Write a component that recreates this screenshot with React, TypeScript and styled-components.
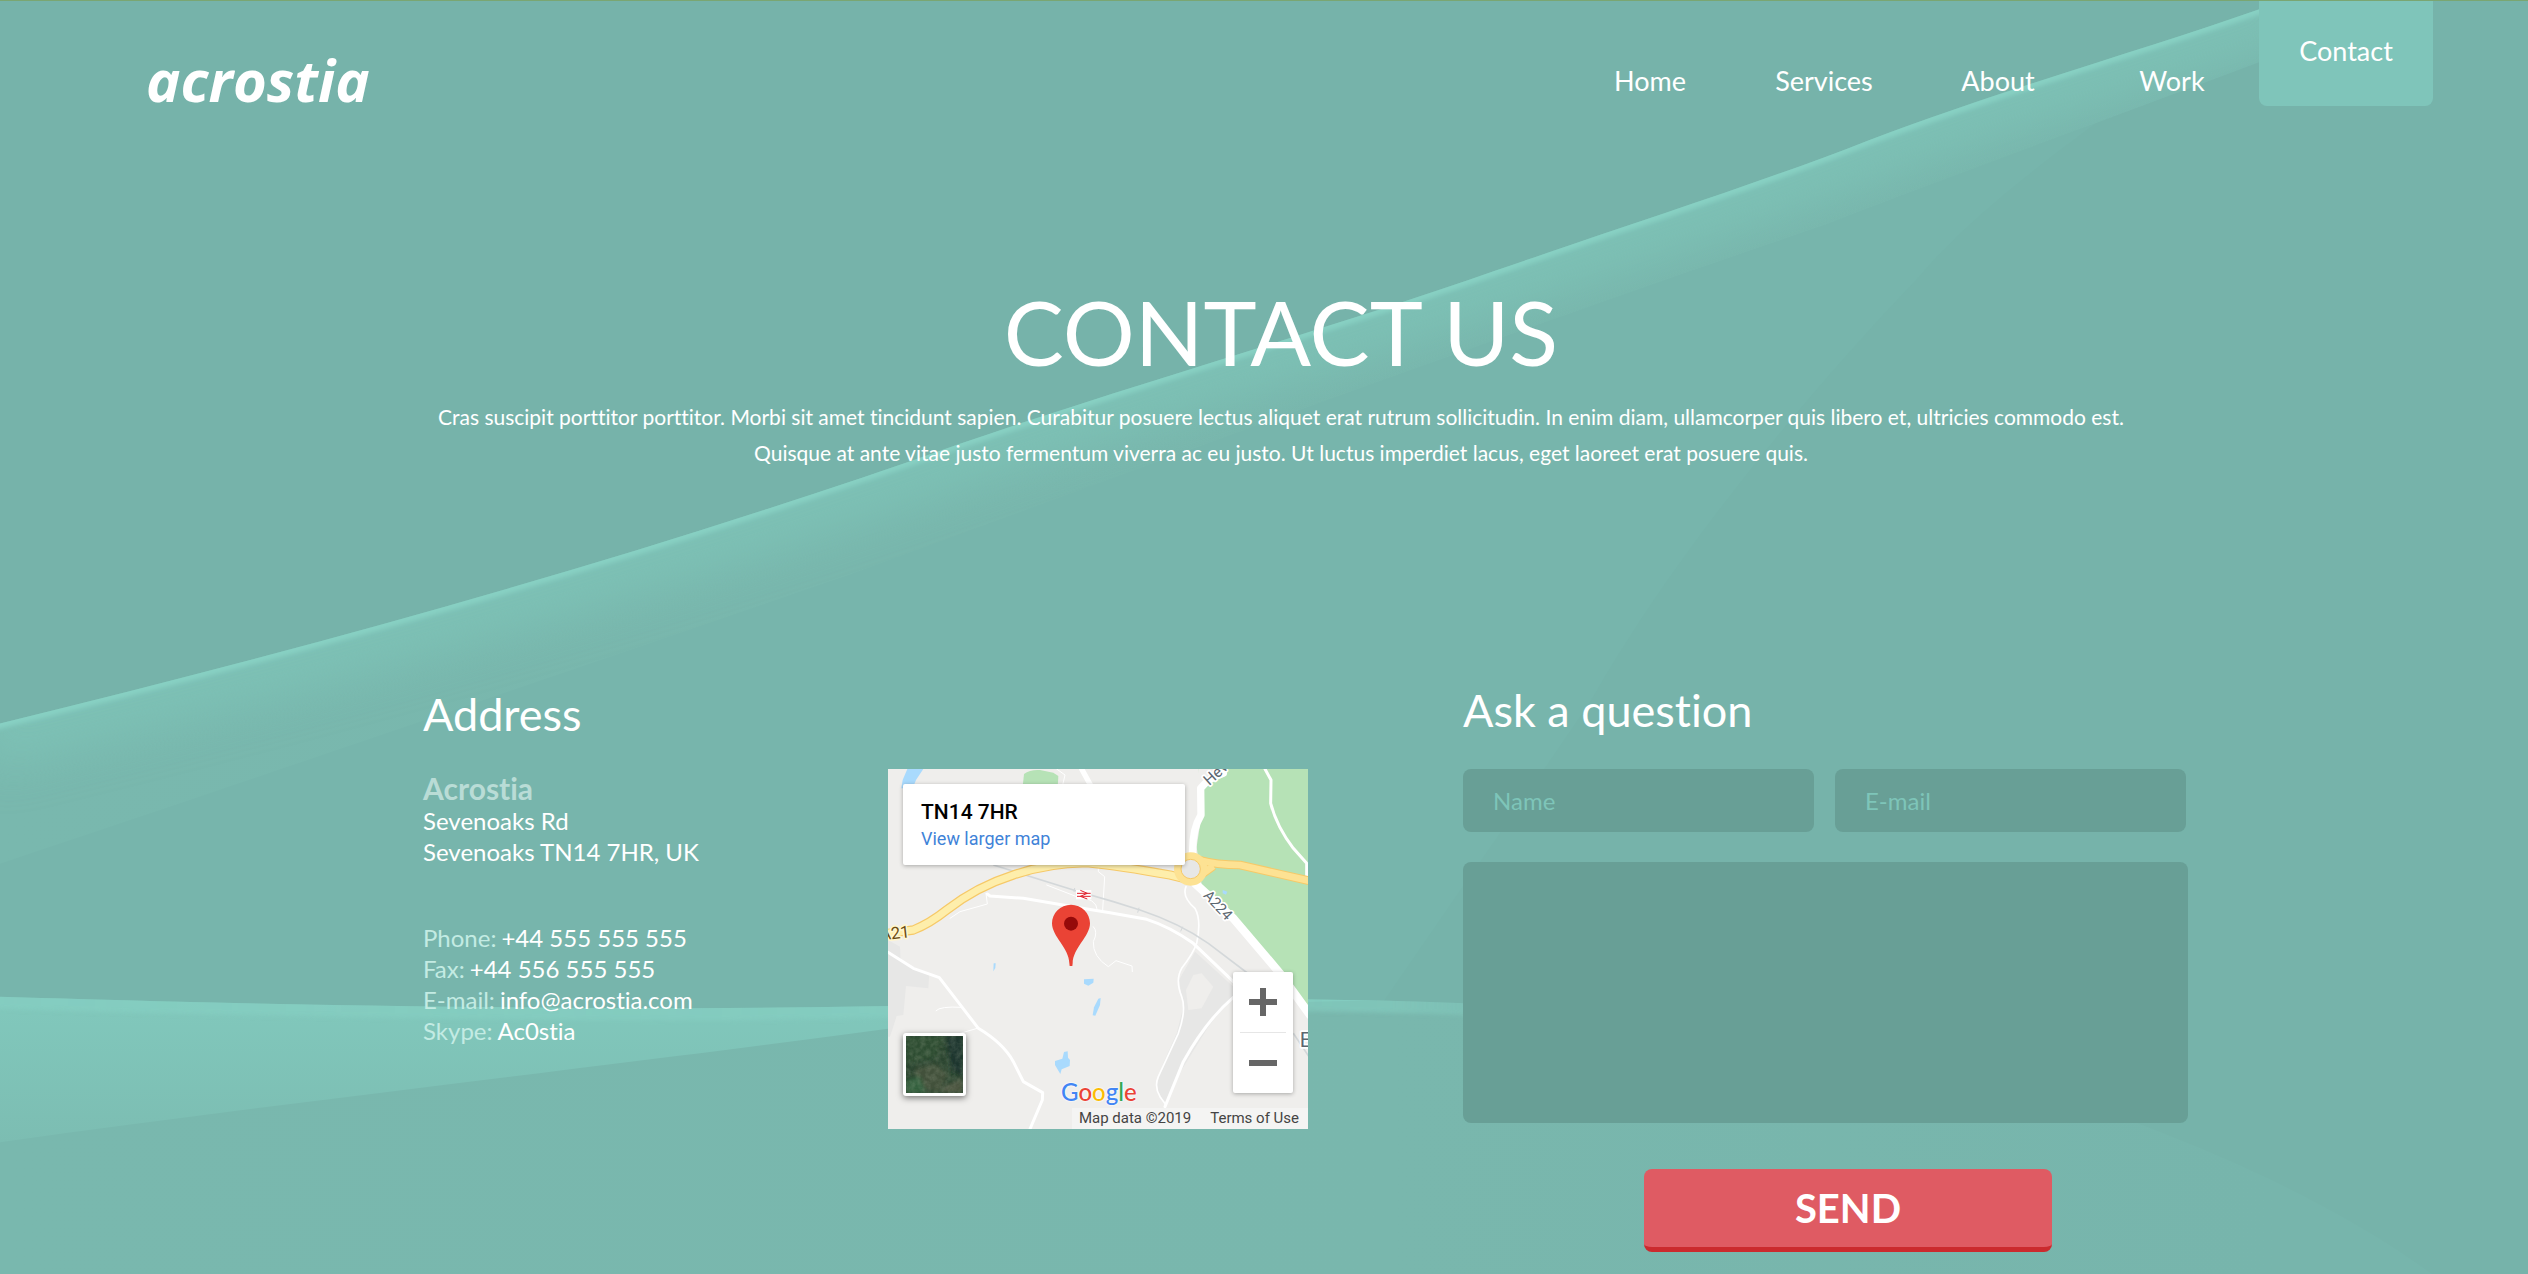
import React from "react";
import styled, { createGlobalStyle } from "styled-components";

const GlobalStyle = createGlobalStyle`
  *, *::before, *::after { box-sizing: border-box; }
  body {
    margin: 0;
    background: #76b3aa;
    color: #fff;
    font-family: Lato, "Open Sans", sans-serif;
    font-variant-ligatures: none;
  }
  h1, h2, p, dl, dd, address { margin: 0; font-style: normal; font-weight: 400; }
  a { color: inherit; text-decoration: none; }
  button, input, textarea { font: inherit; border: 0; }
`;

const Page = styled.div`
  position: relative;
  isolation: isolate;
  min-height: 100vh;
  overflow: hidden;
  border-top: 1px solid #7aa672;
`;

const Backdrop = styled.svg`
  position: absolute;
  inset: 0;
  z-index: -1;
  width: 100%;
  height: 100%;
`;

const Header = styled.header`
  display: flex;
  justify-content: space-between;
  align-items: flex-start;
  margin-top: -1px;
  padding: 0 95px 0 146px;
`;

const Logo = styled.a`
  padding-top: 44px;
  font-family: "Open Sans", "Noto Sans", sans-serif;
  font-size: 58px;
  font-style: italic;
  font-weight: 700;
  line-height: 72px;
`;

const Nav = styled.nav`
  display: flex;
`;

const NavLink = styled.a<{ $active?: boolean }>`
  width: 174px;
  height: 106px;
  padding-top: ${(p) => (p.$active ? 35 : 65)}px;
  border-radius: 0 0 8px 8px;
  background: ${(p) => (p.$active ? "#7fc5ba" : "transparent")};
  font-size: 27px;
  line-height: 32px;
  text-align: center;
`;

const Hero = styled.section`
  padding: 161px 340px 0 374px;
  text-align: center;
`;

const Title = styled.h1`
  font-size: 90px;
  line-height: 108px;
`;

const Intro = styled.div`
  margin-top: 14px;
  font-size: 21px;
  line-height: 36px;
`;

const Columns = styled.main`
  display: grid;
  grid-template-columns: 465fr 575fr 725fr;
  align-items: start;
  padding: 212px 340px 22px 423px;
`;

const AddressColumn = styled.section`
  padding-top: 4px;
`;

const Heading = styled.h2`
  font-size: 45px;
  line-height: 54px;
`;

const AddressBlock = styled.address`
  margin: 30px 0 55px;
  font-size: 24px;
  line-height: 31px;
`;

const Company = styled.div`
  color: #b9dcd6;
  font-size: 30px;
  font-weight: 700;
  line-height: 34px;
`;

const Details = styled.dl`
  font-size: 24px;
  line-height: 31px;
`;

const Detail = styled.div`
  display: flex;
  gap: 5px;
  dt { color: #c3ebe3; }
`;

const MapFrame = styled.section`
  position: relative;
  width: 420px;
  height: 360px;
  margin-top: 86px;
  overflow: hidden;
  background: #efeeec;
  color: #000;
  font-family: Roboto, sans-serif;
`;

const MapDrawing = styled.svg`
  display: block;
  width: 100%;
  height: 100%;
`;

const PlaceCard = styled.div`
  position: absolute;
  top: 15px;
  left: 15px;
  width: 282px;
  height: 81px;
  padding: 15px 18px;
  border-radius: 2px;
  background: #fff;
  box-shadow: 0 1px 4px rgba(0, 0, 0, 0.3);
`;

const PlaceName = styled.div`
  font-size: 21px;
  font-weight: 500;
  line-height: 27px;
`;

const PlaceLink = styled.a`
  display: block;
  color: #3f83d8;
  font-size: 18px;
  line-height: 26px;
`;

const ZoomControl = styled.div`
  position: absolute;
  right: 15px;
  bottom: 36px;
  display: flex;
  flex-direction: column;
  width: 60px;
  height: 121px;
  border-radius: 2px;
  background: #fff;
  box-shadow: 0 1px 4px rgba(0, 0, 0, 0.3);
`;

const ZoomButton = styled.button`
  flex: 1;
  display: grid;
  place-items: center;
  padding: 0;
  background: none;
`;

const ZoomRule = styled.div`
  height: 1px;
  margin: 0 7px;
  background: #e6e6e6;
`;

const Satellite = styled.button`
  position: absolute;
  left: 15px;
  bottom: 33px;
  width: 63px;
  height: 63px;
  padding: 3px;
  border-radius: 3px;
  background: #fff;
  box-shadow: 0 2px 6px rgba(0, 0, 0, 0.5);
  svg { display: block; width: 57px; height: 57px; }
`;

const Brand = styled.div`
  position: absolute;
  left: 173px;
  bottom: 22px;
  font-family: Lato, sans-serif;
  font-size: 24px;
  font-weight: 500;
  line-height: 30px;
  text-shadow: 0 0 2px #fff, 0 0 2px #fff;
`;

const BrandLetter = styled.span<{ $color: string }>`
  color: ${(p) => p.$color};
`;

const MapFooter = styled.div`
  position: absolute;
  right: 0;
  bottom: 0;
  display: flex;
  gap: 19px;
  padding: 0 9px 0 7px;
  background: rgba(245, 245, 245, 0.8);
  color: #444;
  font-size: 15px;
  line-height: 21px;
`;

const Form = styled.form`
  display: flex;
  flex-direction: column;
`;

const FieldRow = styled.div`
  display: grid;
  grid-template-columns: 1fr 1fr;
  gap: 21px;
  margin: 32px 2px 30px 0;
`;

const HiddenLabel = styled.label`
  position: absolute;
  width: 1px;
  height: 1px;
  overflow: hidden;
  clip-path: inset(50%);
`;

const Input = styled.input`
  width: 100%;
  height: 63px;
  padding: 0 30px;
  border-radius: 8px;
  background: #689f96;
  color: #fff;
  font-size: 24px;
  outline: 0;
  &::placeholder { color: #7ec5b9; opacity: 1; }
`;

const Message = styled.textarea`
  display: block;
  width: 100%;
  height: 261px;
  padding: 20px 30px;
  border-radius: 8px;
  background: #689f96;
  color: #fff;
  font-size: 24px;
  resize: none;
  outline: 0;
`;

const SendButton = styled.button`
  align-self: flex-end;
  width: 408px;
  height: 83px;
  margin: 46px 136px 0 0;
  padding: 0;
  border-bottom: 5px solid #cb2a2e;
  border-radius: 8px;
  background: #df5b63;
  color: #fff;
  font-size: 40px;
  font-weight: 700;
  line-height: 48px;
`;

const RIDGE =
  "M-20 728 C300 650 630 560 960 443 C1150 378 1330 328 1495 270 C1640 220 1760 182 1867 140 C2010 86 2150 47 2263 7 L2290 -10";
const WAVE =
  "M-20 996 C200 1003 450 1008 689 1008 C900 1008 1100 998 1300 999 C1650 1003 1900 1030 2142 1125 C2260 1170 2360 1220 2440 1280";

function BackgroundArt() {
  return (
    <Backdrop viewBox="0 0 2528 1274" preserveAspectRatio="none" aria-hidden="true">
      <defs>
        <clipPath id="below-ridge">
          <path d={`${RIDGE} L2528 -10 L2528 1274 L-20 1274 Z`} />
        </clipPath>
        <clipPath id="below-wave">
          <path d={`${WAVE} L-20 1280 Z`} />
        </clipPath>
        <clipPath id="lit-area">
          <path d="M2420 0 C2200 85 1950 175 1828 223 C1500 335 1200 445 850 574 C600 660 250 780 -20 870 L-20 600 L2200 -40 Z" />
        </clipPath>
        <filter id="soft-line" x="-5%" y="-5%" width="110%" height="110%">
          <feGaussianBlur stdDeviation="2" />
        </filter>
        <filter id="soft-band" x="-10%" y="-20%" width="120%" height="140%">
          <feGaussianBlur stdDeviation="22" />
        </filter>
        <linearGradient id="lit-slope" x1="0" y1="0" x2="2528" y2="0" gradientUnits="userSpaceOnUse">
          <stop offset="0" stopColor="#79b8ae" />
          <stop offset="0.35" stopColor="#79b7ad" />
          <stop offset="1" stopColor="#78b5ac" />
        </linearGradient>
        <linearGradient id="wave-line" x1="0" y1="0" x2="2528" y2="0" gradientUnits="userSpaceOnUse">
          <stop offset="0" stopColor="#86cfc2" />
          <stop offset="0.55" stopColor="#86cfc2" stopOpacity="0.8" />
          <stop offset="0.65" stopColor="#86cfc2" stopOpacity="0" />
        </linearGradient>
        <linearGradient id="wave-body" x1="0" y1="0" x2="2528" y2="0" gradientUnits="userSpaceOnUse">
          <stop offset="0" stopColor="#79b8ae" />
          <stop offset="0.55" stopColor="#79b7ad" />
          <stop offset="0.9" stopColor="#77b5ac" />
        </linearGradient>
        <linearGradient id="wave-band" x1="0" y1="1000" x2="0" y2="1143" gradientUnits="userSpaceOnUse">
          <stop offset="0" stopColor="#81c8bc" />
          <stop offset="1" stopColor="#7cbdb2" />
        </linearGradient>
      </defs>
      <rect width="2528" height="1274" fill="#76b3aa" />
      <g clipPath="url(#below-ridge)">
        <path
          d="M2263 7 C2142 89 1990 190 1919 276 C1800 400 1670 560 1591 700 C1510 820 1410 960 1315 1103 L1180 1280 L-20 1280 L-20 700 Z"
          fill="#77b5ac"
        />
        <g clipPath="url(#lit-area)">
          <rect width="2528" height="900" fill="url(#lit-slope)" />
          <path d={RIDGE} fill="none" stroke="#7fc4b8" strokeWidth="90" opacity="0.7" filter="url(#soft-band)" />
        </g>
        <path d={RIDGE} fill="none" stroke="#87d0c3" strokeWidth="10" filter="url(#soft-line)" />
      </g>
      <g clipPath="url(#below-wave)">
        <rect y="990" width="2528" height="284" fill="url(#wave-body)" />
        <path d="M-20 980 L1400 980 L1400 1000 C1200 1002 1000 1015 884 1029 C620 1065 300 1100 -20 1145 Z" fill="url(#wave-band)" />
        <path d={WAVE} fill="none" stroke="url(#wave-line)" strokeWidth="24" opacity="0.7" filter="url(#soft-line)" />
      </g>
    </Backdrop>
  );
}

function StreetMap() {
  return (
    <MapDrawing viewBox="24 27 1260 1080" role="img" aria-label="Map of TN14 7HR" fontFamily="Roboto, sans-serif">
      <rect x="24" y="27" width="1260" height="1080" fill="#efeeec" />
      <g fill="#e7e7e6">
        <path d="M24 540 L60 560 L62 605 L148 640 L145 685 L78 678 L70 765 L50 768 L30 830 L24 830 Z" />
        <path d="M945 575 L1060 680 L1060 705 L985 800 L880 970 L855 1035 L828 980 L850 910 L890 820 L910 740 L897 660 Z" />
      </g>
      <path d="M918 690 L940 645 L965 640 L1000 680 L965 745 L925 750 Z" fill="#efeeec" />
      <path d="M955 27 L1284 27 L1284 760 L1200 640 L1060 475 L965 375 L950 260 L970 130 Z" fill="#b6e2b6" />
      <path d="M955 27 H1010 L975 75 L955 75 Z" fill="#efeeec" />
      <path d="M428 80 L432 42 Q450 28 480 30 L520 38 L535 48 L533 85 L428 85 Z" fill="#b6e2b6" />
      <g fill="#a9dafd">
        <path d="M82 27 L130 27 L108 60 L98 85 L64 85 L68 60 Z" />
        <path d="M612 658 L641 656 L640 668 L625 677 L612 671 Z" />
        <path d="M662 714 L660 735 L646 767 L638 766 L642 742 L655 716 Z" />
        <path d="M552 876 L563 874 L564 893 L570 900 L569 918 L545 928 L541 942 L525 915 L525 903 L547 896 Z" />
        <path d="M341 610 L347 610 L346 624 L340 634 Z" />
        <path d="M1028 390 L1042 395 L1038 404 L1028 400 Z" />
      </g>
      <g fill="none" stroke="#fff" strokeLinecap="round" strokeLinejoin="round">
        <path d="M322 402 L330 408 L430 415 L580 440 L690 458 L800 478 Q870 500 940 550 L1060 665" strokeWidth="9" />
        <path d="M24 577 L100 625 L178 653 L245 740 L295 805 Q370 850 400 905 L430 965 L488 998 L487 1020 L450 1107" strokeWidth="9" />
        <path d="M1060 712 Q980 780 910 905 L855 1040" strokeWidth="9" />
        <path d="M918 380 Q905 410 945 445 Q965 480 950 550 Q940 580 905 625 Q885 660 905 710 Q920 750 895 820 L835 950 Q822 980 840 1010 L858 1035" strokeWidth="5" />
        <path d="M318 400 L322 432 L240 455 L210 475 M500 375 L590 410 Q650 415 652 450 M655 318 L655 335 L674 350 L668 450 M640 500 Q655 515 640 545 Q638 590 685 620 L708 602 L756 618 L757 635 M168 752 Q180 738 245 742 M240 820 L292 805 M530 27 L555 45 L548 75" strokeWidth="3" />
        <path d="M605 27 L645 100" strokeWidth="16" />
        <path d="M1030 40 Q985 55 962 85 L963 165 Q935 210 938 290" strokeWidth="22" />
        <path d="M945 370 L1060 475 L1200 640 L1290 765" strokeWidth="25" />
        <path d="M1155 27 L1173 60 L1172 130 Q1190 200 1240 265 L1280 310 L1280 350" strokeWidth="9" />
      </g>
      <path d="M340 315 L590 393 L700 425 L780 450 Q900 490 985 550 L1110 645 M1240 820 L1290 895" fill="none" stroke="#d4d8da" strokeWidth="5" />
      <path d="M584 384 L582 396 M777 443 L773 458 M908 500 L902 514" stroke="#d4d8da" strokeWidth="3" />
      <g fill="none" strokeLinejoin="round">
        <path d="M24 520 L100 510 Q150 490 200 450 Q290 380 400 345 Q500 310 620 308 Q720 318 870 345 L910 355" stroke="#f6c968" strokeWidth="28" />
        <path d="M24 520 L100 510 Q150 490 200 450 Q290 380 400 345 Q500 310 620 308 Q720 318 870 345 L910 355" stroke="#feeeab" strokeWidth="21" />
        <path d="M955 300 Q1010 315 1080 315 L1290 363 M940 360 Q970 340 1000 318" stroke="#f6c968" strokeWidth="26" />
        <path d="M955 300 Q1010 315 1080 315 L1290 363 M940 360 Q970 340 1000 318" stroke="#fde293" strokeWidth="20" />
        <circle cx="932" cy="327" r="38" stroke="#fde293" strokeWidth="24" />
        <circle cx="932" cy="327" r="29" fill="#e7e7e6" stroke="#f6c968" strokeWidth="3" />
      </g>
      <g stroke="#fff" strokeWidth="10" strokeLinejoin="round" paintOrder="stroke" fill="#5c6770">
        <text fontSize="46" transform="translate(988 78) rotate(-42)">Hev</text>
        <text fontSize="44" transform="translate(968 408) rotate(47)">A224</text>
        <text x="1259" y="860" fontSize="62">E</text>
        <text fontSize="50" fill="#6b4a12" stroke="#fff6cf" transform="translate(2 541) rotate(-6)">A21</text>
      </g>
      <rect x="588" y="390" width="46" height="28" fill="#fff" />
      <path d="M591 400 H632 M591 409 H632 M601 391 L622 400 L601 409 L622 417" fill="none" stroke="#e0202c" strokeWidth="3" />
      <path d="M573 434 C541 434 516 459 516 490 C516 530 568 565 568 610 L569 618 H577 L578 610 C578 565 630 530 630 490 C630 459 605 434 573 434 Z" fill="#ea4335" />
      <circle cx="573" cy="491" r="21" fill="#960a0a" />
    </MapDrawing>
  );
}

function SatelliteThumb() {
  return (
    <svg viewBox="0 0 57 57" aria-hidden="true">
      <defs>
        <filter id="terrain" x="0" y="0" width="100%" height="100%">
          <feGaussianBlur stdDeviation="2" />
        </filter>
        <filter id="grain" x="0" y="0" width="100%" height="100%">
          <feTurbulence type="fractalNoise" baseFrequency="0.2" numOctaves="3" seed="4" />
          <feColorMatrix values="0 0 0 0 0.5  0 0 0 0 0.55  0 0 0 0 0.42  0.9 0 0 0 -0.28" />
        </filter>
      </defs>
      <rect width="57" height="57" fill="#2b4530" />
      <g filter="url(#terrain)">
        <path d="M0 0 H38 L30 22 L0 28 Z" fill="#2f4d31" />
        <path d="M40 0 H57 V40 L46 34 Z" fill="#1b352d" />
        <path d="M10 32 L30 28 L42 38 L34 57 L8 50 Z" fill="#43513a" />
        <path d="M0 44 L14 40 L20 57 H0 Z" fill="#335f3c" />
        <path d="M38 50 L57 42 V57 H36 Z" fill="#4b5440" />
      </g>
      <rect width="57" height="57" filter="url(#grain)" opacity="0.4" />
    </svg>
  );
}

const links = ["Home", "Services", "About", "Work", "Contact"];

const details = [
  ["Phone:", "+44 555 555 555"],
  ["Fax:", "+44 556 555 555"],
  ["E-mail:", "info@acrostia.com"],
  ["Skype:", "Ac0stia"],
];

const brand = [
  ["G", "#4285f4"],
  ["o", "#ea4335"],
  ["o", "#fbbc05"],
  ["g", "#4285f4"],
  ["l", "#34a853"],
  ["e", "#ea4335"],
];

export default function App() {
  return (
    <Page>
      <GlobalStyle />
      <BackgroundArt />
      <Header>
        <Logo href="#">acrostia</Logo>
        <Nav>
          {links.map((name) => (
            <NavLink key={name} href={`#${name.toLowerCase()}`} $active={name === "Contact"}>
              {name}
            </NavLink>
          ))}
        </Nav>
      </Header>
      <Hero>
        <Title>CONTACT US</Title>
        <Intro>
          <p>
            Cras suscipit porttitor porttitor. Morbi sit amet tincidunt sapien. Curabitur posuere lectus aliquet erat
            rutrum sollicitudin. In enim diam, ullamcorper quis libero et, ultricies commodo est.
          </p>
          <p>
            Quisque at ante vitae justo fermentum viverra ac eu justo. Ut luctus imperdiet lacus, eget laoreet erat
            posuere quis.
          </p>
        </Intro>
      </Hero>
      <Columns>
        <AddressColumn>
          <Heading>Address</Heading>
          <AddressBlock>
            <Company>Acrostia</Company>
            <div>Sevenoaks Rd</div>
            <div>Sevenoaks TN14 7HR, UK</div>
          </AddressBlock>
          <Details>
            {details.map(([label, value]) => (
              <Detail key={label}>
                <dt>{label}</dt>
                <dd>{value}</dd>
              </Detail>
            ))}
          </Details>
        </AddressColumn>
        <MapFrame>
          <StreetMap />
          <PlaceCard>
            <PlaceName>TN14 7HR</PlaceName>
            <PlaceLink href="#map">View larger map</PlaceLink>
          </PlaceCard>
          <Satellite type="button" aria-label="Show satellite imagery">
            <SatelliteThumb />
          </Satellite>
          <ZoomControl>
            <ZoomButton type="button" aria-label="Zoom in">
              <svg width="28" height="28" viewBox="0 0 28 28">
                <path d="M0 14 H28 M14 0 V28" stroke="#666" strokeWidth="6" />
              </svg>
            </ZoomButton>
            <ZoomRule />
            <ZoomButton type="button" aria-label="Zoom out">
              <svg width="28" height="28" viewBox="0 0 28 28">
                <path d="M0 14 H28" stroke="#666" strokeWidth="6" />
              </svg>
            </ZoomButton>
          </ZoomControl>
          <Brand>
            {brand.map(([letter, color], i) => (
              <BrandLetter key={i} $color={color}>
                {letter}
              </BrandLetter>
            ))}
          </Brand>
          <MapFooter>
            <span>Map data ©2019</span>
            <a href="#terms">Terms of Use</a>
          </MapFooter>
        </MapFrame>
        <Form>
          <Heading>Ask a question</Heading>
          <FieldRow>
            <div>
              <HiddenLabel htmlFor="name">Name</HiddenLabel>
              <Input id="name" type="text" placeholder="Name" />
            </div>
            <div>
              <HiddenLabel htmlFor="email">E-mail</HiddenLabel>
              <Input id="email" type="email" placeholder="E-mail" />
            </div>
          </FieldRow>
          <HiddenLabel htmlFor="message">Message</HiddenLabel>
          <Message id="message" />
          <SendButton type="submit">SEND</SendButton>
        </Form>
      </Columns>
    </Page>
  );
}
